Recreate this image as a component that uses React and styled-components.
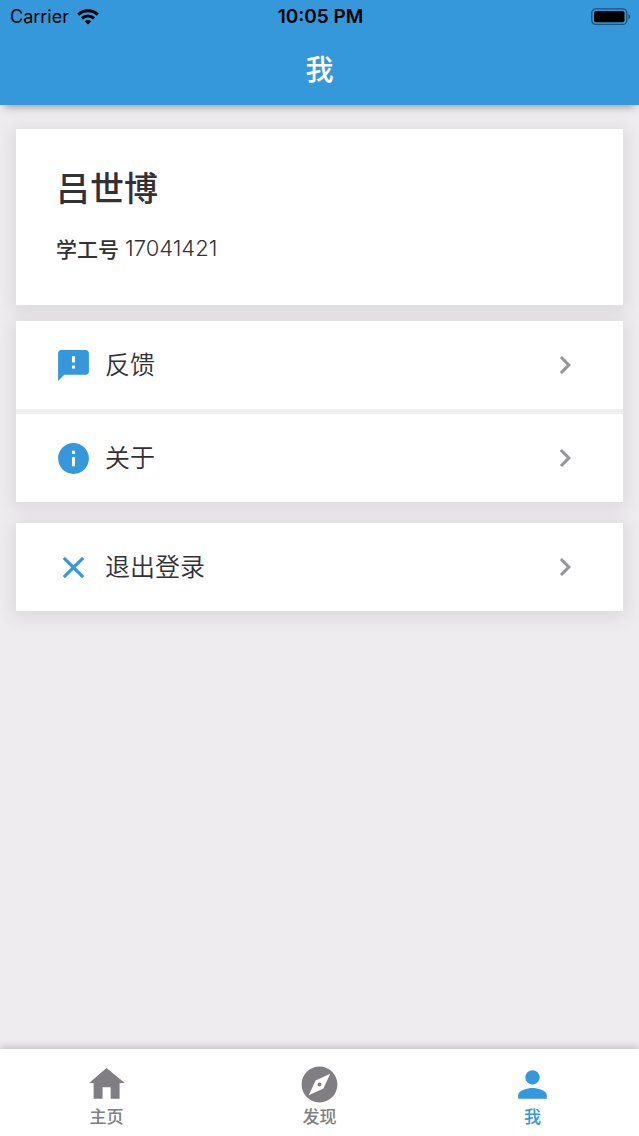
import React from 'react'
import styled, { createGlobalStyle } from 'styled-components'
import {
  MdChevronRight,
  MdClose,
  MdExplore,
  MdFeedback,
  MdInfo,
  MdPerson,
} from 'react-icons/md'

const GlobalStyle = createGlobalStyle`
    * {
        box-sizing: border-box;
    }

    body {
        margin: 0;
        background-color: #eeecef;
        color: #333135;
        font-family: "Noto Sans CJK SC", sans-serif;
    }

    button {
        border: none;
        padding: 0;
        color: inherit;
        font-family: inherit;
        cursor: pointer;
    }
`;

const Container = styled.div`
    min-height: 100vh;
    display: flex;
    flex-direction: column;
`;

const Header = styled.header`
    background-color: #3498db;
    padding-bottom: 16px;
    box-shadow: 0 6px 8px -4px rgba(0, 0, 0, 0.35);
`;

const StatusBar = styled.div`
    height: 32px;
    padding: 0 8px 0 10px;
    display: grid;
    grid-template-columns: 1fr auto 1fr;
    align-items: center;
    color: #000;
    font-family: Inter, sans-serif;
    font-size: 18px;
    line-height: 34px;
`;

const Carrier = styled.div`
    display: flex;
    align-items: center;
    gap: 8px;
`;

const Time = styled.time`
    font-size: 19px;
    font-weight: 600;
`;

const Battery = styled.svg`
    justify-self: end;
`;

const Title = styled.h1`
    margin: 16px 0 0;
    color: #fff;
    font-size: 28px;
    font-weight: 500;
    line-height: 41px;
    text-align: center;
`;

const Content = styled.main`
    flex: 1;
    padding: 24px 16px;
`;

const Card = styled.section`
    margin-bottom: ${(props) => props.$gap || 0}px;
    background-color: #fff;
    box-shadow: 0 3px 16px 4px rgba(0, 0, 0, 0.08);
`;

const Profile = styled.div`
    padding: 32px 40px 42px;
`;

const Name = styled.h2`
    margin: 0 0 20px;
    font-size: 34px;
    font-weight: 500;
    line-height: 52px;
`;

const StaffId = styled.p`
    margin: 0;
    display: flex;
    gap: 6px;
    font-size: 21px;
    line-height: 30px;

    strong {
        font-weight: 500;
    }
`;

const Digits = styled.span`
    font-family: Inter, sans-serif;
    font-size: 22px;
    font-weight: 300;
`;

const Row = styled.button`
    width: 100%;
    height: 88px;
    padding: 0 40px 0 39px;
    display: flex;
    align-items: center;
    gap: 13px;
    background-color: transparent;
    font-size: 25px;
    font-weight: 350;
    line-height: 36px;
    text-align: left;

    & + & {
        height: 93px;
        border-top: 5px solid #efeef0;
    }

    svg {
        flex: none;
    }
`;

const RowLabel = styled.span`
    flex: 1;
    padding-bottom: 4px;
`;

const TabBar = styled.nav`
    height: 87px;
    display: grid;
    grid-template-columns: repeat(3, 1fr);
    background-color: #fff;
    box-shadow: 0 -2px 8px rgba(0, 0, 0, 0.2);
`;

const Tab = styled.button`
    padding-top: 14px;
    display: flex;
    flex-direction: column;
    align-items: center;
    background-color: transparent;
    color: ${(props) => (props.$active ? '#3498db' : '#807e82')};
    font-size: 17px;
    font-weight: 500;
    line-height: 20px;
`;

const WifiIcon = () => (
  <svg width="22" height="16" viewBox="0 0 22 16" aria-hidden="true">
    <g fill="none" stroke="#000" strokeWidth="3">
      <path d="M1.2 5.6C6.8.6 15.2.6 20.8 5.6" />
      <path d="M4.9 9.4C8.4 6.3 13.6 6.3 17.1 9.4" />
    </g>
    <path d="M7.8 12.2C9.6 10.6 12.4 10.6 14.2 12.2L11 15.4z" />
  </svg>
)

const BatteryIcon = () => (
  <Battery width="40" height="18" viewBox="0 0 40 18" aria-hidden="true">
    <rect x="0.8" y="0.8" width="35" height="15.6" rx="4" fill="none" stroke="#1d5377" strokeWidth="1.3" />
    <rect x="3" y="3" width="30.5" height="11.2" rx="2" />
    <path d="M37.4 6c2.4.8 2.4 4.4 0 5.2z" fill="#1d5377" />
  </Battery>
)

const HomeIcon = ({ size }) => (
  <svg width={size} height={size} viewBox="0 0 24 24" fill="currentColor" aria-hidden="true">
    <path d="M9.8 20v-6.4h4.5V20h5v-8.8h2.9L12 2.8 2.3 11.2h2.5V20z" />
  </svg>
)

const groups = [
  {
    gap: 21,
    rows: [
      { label: '反馈', Icon: MdFeedback },
      { label: '关于', Icon: MdInfo },
    ],
  },
  {
    gap: 0,
    rows: [{ label: '退出登录', Icon: MdClose }],
  },
]

const tabs = [
  { label: '主页', Icon: HomeIcon },
  { label: '发现', Icon: MdExplore },
  { label: '我', Icon: MdPerson, active: true },
]

const App = () => {
  return (
    <Container>
        <GlobalStyle />
        <Header>
            <StatusBar>
                <Carrier>
                    Carrier
                    <WifiIcon />
                </Carrier>
                <Time>10:05 PM</Time>
                <BatteryIcon />
            </StatusBar>
            <Title>我</Title>
        </Header>
        <Content>
            <Card $gap={16}>
                <Profile>
                    <Name>吕世博</Name>
                    <StaffId>
                        <strong>学工号</strong>
                        <Digits>17041421</Digits>
                    </StaffId>
                </Profile>
            </Card>
            {groups.map((group) => (
                <Card $gap={group.gap} key={group.rows[0].label}>
                    {group.rows.map(({ label, Icon }) => (
                        <Row type="button" key={label}>
                            <Icon size={37} color="#3498db" />
                            <RowLabel>{label}</RowLabel>
                            <MdChevronRight size={36} color="#979599" />
                        </Row>
                    ))}
                </Card>
            ))}
        </Content>
        <TabBar>
            {tabs.map(({ label, Icon, active }) => (
                <Tab type="button" key={label} $active={active} aria-current={active ? 'page' : undefined}>
                    <Icon size={43} />
                    {label}
                </Tab>
            ))}
        </TabBar>
    </Container>
  )
}

export default App
